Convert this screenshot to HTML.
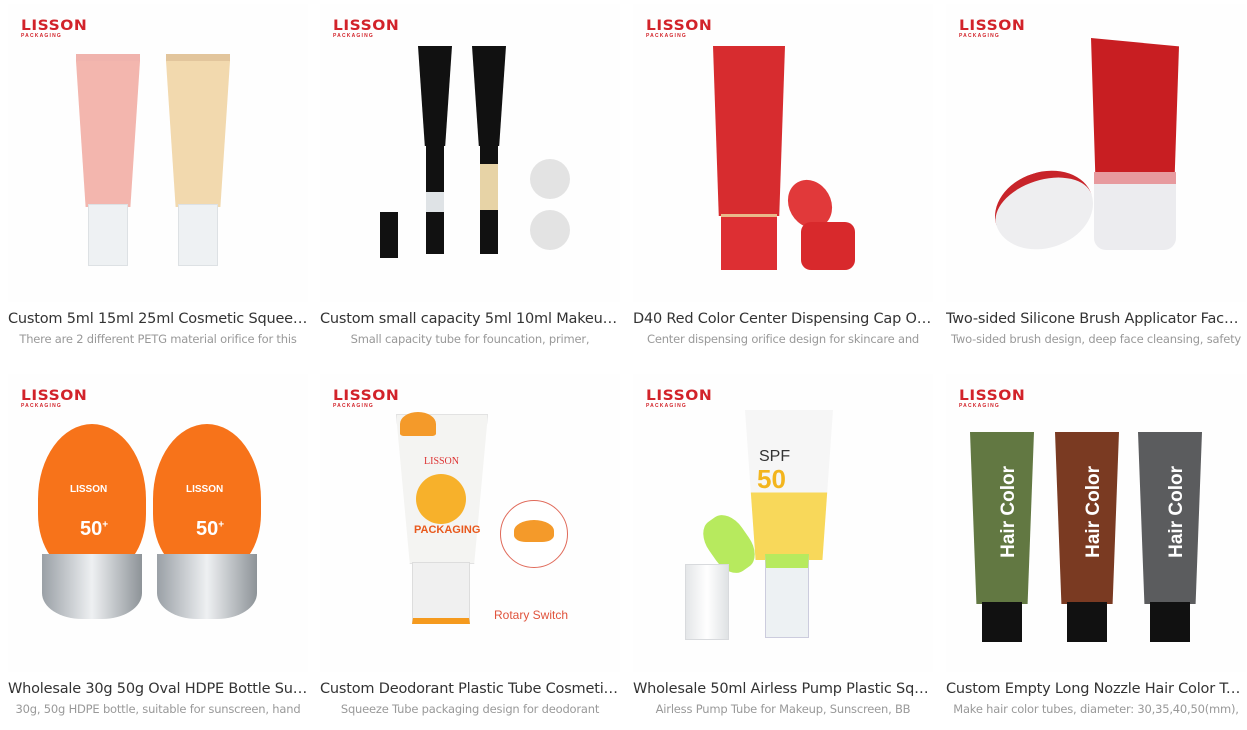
<!DOCTYPE html>
<html><head><meta charset="utf-8">
<style>
*{margin:0;padding:0;box-sizing:border-box}
body{width:1247px;height:728px;background:#fff;font-family:"Liberation Sans","DejaVu Sans",sans-serif;position:relative;overflow:hidden}
.card{position:absolute;width:300px;height:360px}
.img{position:absolute;left:0;top:4px;width:300px;height:298px;background:#fefefe;overflow:hidden}
.logo{position:absolute;left:13px;top:15px;line-height:1}
.logo b{display:block;color:#d2232a;font-size:14px;font-weight:900;letter-spacing:.5px;font-family:"DejaVu Sans","Liberation Sans",sans-serif;transform:scaleX(1.1);transform-origin:left}
.logo i{display:block;color:#d2232a;font-size:5px;font-style:normal;letter-spacing:1.2px;margin-top:1px;font-weight:bold}
.t{position:absolute;top:311px;left:0;width:300px;font-size:14.5px;color:#333;white-space:nowrap;overflow:hidden;text-overflow:ellipsis;font-family:"DejaVu Sans","Liberation Sans",sans-serif;letter-spacing:-.2px}
.d{position:absolute;top:332px;left:0;width:300px;text-align:center;font-size:11.5px;color:#999;white-space:nowrap;overflow:hidden;font-family:"DejaVu Sans","Liberation Sans",sans-serif;letter-spacing:-.2px}
.a{position:absolute}
.vt{position:absolute;writing-mode:vertical-rl;transform:rotate(180deg);color:#fff;font-weight:bold;font-family:"Liberation Sans",sans-serif}
</style></head><body>

<!-- Row 1 -->
<div class="card" style="left:8px;top:0">
 <div class="img">
  <div class="logo"><b>LISSON</b><i>PACKAGING</i></div>
  <div class="a" style="left:68px;top:50px;width:64px;height:8px;background:#f0b3ad"></div>
  <div class="a" style="left:68px;top:57px;width:64px;height:146px;background:#f3b6ae;clip-path:polygon(0 0,100% 0,85% 100%,15% 100%)"></div>
  <div class="a" style="left:80px;top:200px;width:40px;height:62px;background:#eef1f3;border:1px solid #dde1e4"></div>
  <div class="a" style="left:158px;top:50px;width:64px;height:8px;background:#e2c59c"></div>
  <div class="a" style="left:158px;top:57px;width:64px;height:146px;background:#f2d9ae;clip-path:polygon(0 0,100% 0,85% 100%,15% 100%)"></div>
  <div class="a" style="left:170px;top:200px;width:40px;height:62px;background:#eef1f3;border:1px solid #dde1e4"></div>
 </div>
 <div class="t">Custom 5ml 15ml 25ml Cosmetic Squeeze Tube</div>
 <div class="d">There are 2 different PETG material orifice for this</div>
</div>

<div class="card" style="left:320px;top:0">
 <div class="img">
  <div class="logo"><b>LISSON</b><i>PACKAGING</i></div>
  <div class="a" style="left:98px;top:42px;width:34px;height:100px;background:#111;clip-path:polygon(0 0,100% 0,80% 100%,20% 100%)"></div>
  <div class="a" style="left:106px;top:140px;width:18px;height:110px;background:#111"></div>
  <div class="a" style="left:106px;top:188px;width:18px;height:20px;background:#dfe3e6"></div>
  <div class="a" style="left:152px;top:42px;width:34px;height:100px;background:#111;clip-path:polygon(0 0,100% 0,80% 100%,20% 100%)"></div>
  <div class="a" style="left:160px;top:140px;width:18px;height:110px;background:#111"></div>
  <div class="a" style="left:160px;top:160px;width:18px;height:46px;background:#e7d3a6"></div>
  <div class="a" style="left:60px;top:208px;width:18px;height:46px;background:#111"></div>
  <div class="a" style="left:210px;top:155px;width:40px;height:40px;border-radius:50%;background:#e3e3e3"></div>
  <div class="a" style="left:210px;top:206px;width:40px;height:40px;border-radius:50%;background:#e3e3e3"></div>
 </div>
 <div class="t">Custom small capacity 5ml 10ml Makeup Tube</div>
 <div class="d">Small capacity tube for founcation, primer,</div>
</div>

<div class="card" style="left:633px;top:0">
 <div class="img">
  <div class="logo"><b>LISSON</b><i>PACKAGING</i></div>
  <div class="a" style="left:80px;top:42px;width:72px;height:170px;background:#d72c2f;clip-path:polygon(0 0,100% 0,92% 100%,8% 100%)"></div>
  <div class="a" style="left:88px;top:210px;width:56px;height:56px;background:#dd2f33;border-top:3px solid #e9b98a"></div>
  <div class="a" style="left:156px;top:175px;width:42px;height:50px;border-radius:50%;background:#e1393a;transform:rotate(-30deg)"></div>
  <div class="a" style="left:168px;top:218px;width:54px;height:48px;border-radius:10px;background:#d8292c"></div>
 </div>
 <div class="t">D40 Red Color Center Dispensing Cap Oval Tube</div>
 <div class="d">Center dispensing orifice design for skincare and</div>
</div>

<div class="card" style="left:946px;top:0">
 <div class="img">
  <div class="logo"><b>LISSON</b><i>PACKAGING</i></div>
  <div class="a" style="left:145px;top:34px;width:88px;height:140px;background:#c81e22;clip-path:polygon(0 0,100% 6%,95% 100%,5% 100%)"></div>
  <div class="a" style="left:148px;top:168px;width:82px;height:78px;background:#ececef;border-radius:0 0 12px 12px;border-top:12px solid #e79a9e"></div>
  <div class="a" style="left:48px;top:168px;width:100px;height:76px;border-radius:50%;background:#eeeef0;transform:rotate(-18deg);border-top:8px solid #c8242a"></div>
 </div>
 <div class="t">Two-sided Silicone Brush Applicator Face Wash Tube</div>
 <div class="d">Two-sided brush design, deep face cleansing, safety</div>
</div>

<!-- Row 2 -->
<div class="card" style="left:8px;top:370px">
 <div class="img">
  <div class="logo"><b>LISSON</b><i>PACKAGING</i></div>
  <div class="a" style="left:30px;top:50px;width:108px;height:150px;border-radius:50% 50% 40% 40%;background:#f7731a"></div>
  <div class="a" style="left:34px;top:180px;width:100px;height:65px;border-radius:0 0 40% 40%;background:linear-gradient(90deg,#9aa0a6,#eef0f2,#8d9398)"></div>
  <div class="a" style="left:145px;top:50px;width:108px;height:150px;border-radius:50% 50% 40% 40%;background:#f7731a"></div>
  <div class="a" style="left:149px;top:180px;width:100px;height:65px;border-radius:0 0 40% 40%;background:linear-gradient(90deg,#9aa0a6,#eef0f2,#8d9398)"></div>
  <div class="a" style="left:62px;top:110px;color:#fff;font-size:10px;font-weight:bold">LISSON</div>
  <div class="a" style="left:72px;top:144px;color:#fff;font-size:20px;font-weight:bold">50<sup style="font-size:10px">+</sup></div>
  <div class="a" style="left:178px;top:110px;color:#fff;font-size:10px;font-weight:bold">LISSON</div>
  <div class="a" style="left:188px;top:144px;color:#fff;font-size:20px;font-weight:bold">50<sup style="font-size:10px">+</sup></div>
 </div>
 <div class="t">Wholesale 30g 50g Oval HDPE Bottle Sunscreen Tube</div>
 <div class="d">30g, 50g HDPE bottle, suitable for sunscreen, hand</div>
</div>

<div class="card" style="left:320px;top:370px">
 <div class="img">
  <div class="logo"><b>LISSON</b><i>PACKAGING</i></div>
  <div class="a" style="left:76px;top:40px;width:92px;height:150px;background:#f4f4f2;border:1px solid #e2e2e2;clip-path:polygon(0 0,100% 0,85% 100%,15% 100%)"></div>
  <div class="a" style="left:80px;top:38px;width:36px;height:24px;border-radius:50% 50% 10% 10%;background:#f49a2a"></div>
  <div class="a" style="left:104px;top:82px;color:#d33;font-size:10px;font-family:'Liberation Serif',serif">LISSON</div>
  <div class="a" style="left:96px;top:100px;width:50px;height:50px;border-radius:50%;background:#f7b12b"></div>
  <div class="a" style="left:94px;top:150px;color:#e8591d;font-size:11px;font-weight:bold">PACKAGING</div>
  <div class="a" style="left:92px;top:188px;width:58px;height:62px;background:#f0f0f0;border:1px solid #ddd;border-bottom:6px solid #f59a1e"></div>
  <div class="a" style="left:180px;top:126px;width:68px;height:68px;border-radius:50%;border:1px solid #e06a5a;background:#fff"></div>
  <div class="a" style="left:194px;top:146px;width:40px;height:22px;border-radius:50% 50% 30% 30%;background:#f49a2a"></div>
  <div class="a" style="left:174px;top:234px;color:#e0533c;font-size:12px">Rotary Switch</div>
 </div>
 <div class="t">Custom Deodorant Plastic Tube Cosmetic Packaging</div>
 <div class="d">Squeeze Tube packaging design for deodorant</div>
</div>

<div class="card" style="left:633px;top:370px">
 <div class="img">
  <div class="logo"><b>LISSON</b><i>PACKAGING</i></div>
  <div class="a" style="left:112px;top:36px;width:88px;height:150px;background:linear-gradient(#f6f6f6 55%,#f8d85a 55%);clip-path:polygon(0 0,100% 0,88% 100%,12% 100%)"></div>
  <div class="a" style="left:126px;top:74px;font-size:16px;color:#333">SPF</div>
  <div class="a" style="left:124px;top:90px;font-size:26px;color:#f3b51e;font-weight:bold">50</div>
  <div class="a" style="left:132px;top:180px;width:44px;height:84px;background:rgba(235,240,242,.9);border:1px solid #ccd;border-top:14px solid #b7ea5e"></div>
  <div class="a" style="left:76px;top:140px;width:40px;height:60px;border-radius:40%;background:#b7ea5e;transform:rotate(-35deg)"></div>
  <div class="a" style="left:52px;top:190px;width:44px;height:76px;background:linear-gradient(90deg,#e4e6e8,#fff,#dfe2e4);border:1px solid #d8dadd"></div>
 </div>
 <div class="t">Wholesale 50ml Airless Pump Plastic Squeeze Tube</div>
 <div class="d">Airless Pump Tube for Makeup, Sunscreen, BB</div>
</div>

<div class="card" style="left:946px;top:370px">
 <div class="img">
  <div class="logo"><b>LISSON</b><i>PACKAGING</i></div>
  <div class="a" style="left:24px;top:58px;width:64px;height:172px;background:#627842;clip-path:polygon(0 0,100% 0,90% 100%,10% 100%)"></div>
  <div class="a" style="left:36px;top:228px;width:40px;height:40px;background:#111"></div>
  <div class="vt" style="left:52px;top:92px;font-size:19px">Hair Color</div>
  <div class="a" style="left:109px;top:58px;width:64px;height:172px;background:#7a3a22;clip-path:polygon(0 0,100% 0,90% 100%,10% 100%)"></div>
  <div class="a" style="left:121px;top:228px;width:40px;height:40px;background:#111"></div>
  <div class="vt" style="left:137px;top:92px;font-size:19px">Hair Color</div>
  <div class="a" style="left:192px;top:58px;width:64px;height:172px;background:#5b5c5e;clip-path:polygon(0 0,100% 0,90% 100%,10% 100%)"></div>
  <div class="a" style="left:204px;top:228px;width:40px;height:40px;background:#111"></div>
  <div class="vt" style="left:220px;top:92px;font-size:19px">Hair Color</div>
 </div>
 <div class="t">Custom Empty Long Nozzle Hair Color Tube</div>
 <div class="d">Make hair color tubes, diameter: 30,35,40,50(mm),</div>
</div>

</body></html>
